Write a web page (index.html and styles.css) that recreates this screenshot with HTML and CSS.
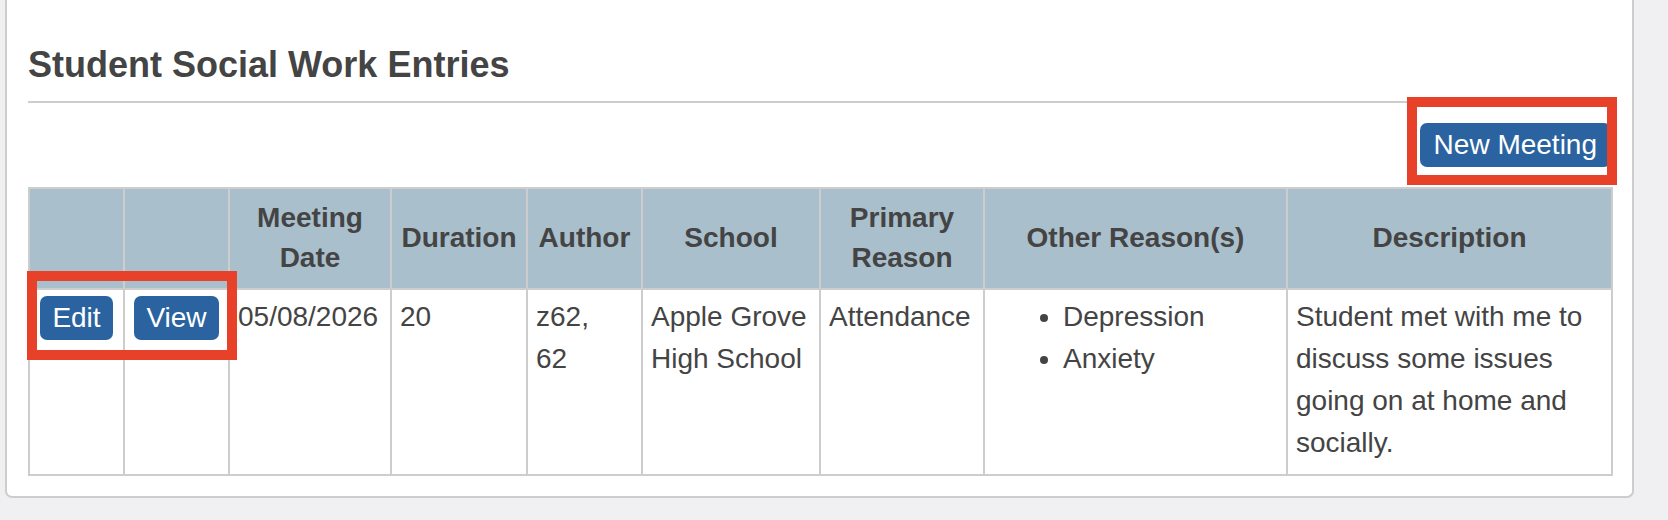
FILE: index.html
```html
<!DOCTYPE html>
<html lang="en">
<head>
  <meta charset="UTF-8">
  <meta name="viewport" content="width=device-width, initial-scale=1.0">
  <title>Student Social Work Entries</title>
  <link rel="stylesheet" href="styles.css">
</head>
<body>
  <div class="page">
    <div class="card">
      <h2 class="card-title">Student Social Work Entries</h2>

      <div class="toolbar">
        <button class="btn">New Meeting</button>
      </div>

      <table class="entries">
        <colgroup>
          <col style="width: 95px">
          <col style="width: 105px">
          <col style="width: 162px">
          <col style="width: 136px">
          <col style="width: 115px">
          <col style="width: 178px">
          <col style="width: 164px">
          <col style="width: 303px">
          <col style="width: 325px">
        </colgroup>
        <thead>
          <tr>
            <th></th>
            <th></th>
            <th>Meeting Date</th>
            <th>Duration</th>
            <th>Author</th>
            <th>School</th>
            <th>Primary Reason</th>
            <th>Other Reason(s)</th>
            <th>Description</th>
          </tr>
        </thead>
        <tbody>
          <tr>
            <td class="action"><button class="btn">Edit</button></td>
            <td class="action"><button class="btn">View</button></td>
            <td>05/08/2026</td>
            <td>20</td>
            <td class="author">z62, 62</td>
            <td>Apple Grove High School</td>
            <td>Attendance</td>
            <td>
              <ul class="reasons">
                <li>Depression</li>
                <li>Anxiety</li>
              </ul>
            </td>
            <td>Student met with me to discuss some issues going on at home and socially.</td>
          </tr>
        </tbody>
      </table>

      <!-- highlight boxes drawn over the screenshot -->
      <div class="callout callout-new"></div>
      <div class="callout callout-actions"></div>
    </div>
  </div>
</body>
</html>
```

FILE: styles.css
```css
body {
  margin: 0;
  padding: 0;
  background-color: #f0f0f2;
  font-family: "Liberation Sans", Arial, Helvetica, sans-serif;
  color: #444;
}

.page {
  padding: 0 34px 0 5px;
}

.card {
  position: relative;
  background-color: #fff;
  border: 2px solid #cdcdcd;
  border-top: none;
  border-radius: 0 0 7px 7px;
  padding: 44px 21px 20px;
}

.card-title {
  margin: 0;
  font-size: 36px;
  line-height: 42px;
  font-weight: bold;
  color: #444;
  padding-bottom: 15px;
  border-bottom: 2px solid #cdcdcd;
}

.toolbar {
  display: flex;
  justify-content: flex-end;
  padding: 20px 0;
}

.btn {
  background-color: #2b63a0;
  color: #fff;
  font-family: inherit;
  font-size: 28px;
  line-height: 32px;
  padding: 6px 12px;
  border: none;
  border-radius: 7px;
  cursor: pointer;
}

.btn:hover {
  background-color: #235389;
}

.toolbar .btn {
  padding: 6px 14px;
}

.entries {
  width: 100%;
  table-layout: fixed;
  border-collapse: collapse;
  font-size: 28px;
}

.entries th,
.entries td {
  border: 2px solid #cdcdcd;
}

.entries th {
  background-color: #a9bfcc;
  font-weight: bold;
  line-height: 40px;
  padding: 9px 8px 10px;
  text-align: center;
  vertical-align: middle;
}

.entries td {
  line-height: 42px;
  padding: 6px 8px 10px;
  vertical-align: top;
  text-align: left;
}

.entries td.action {
  text-align: center;
  padding-left: 4px;
  padding-right: 4px;
}

.entries td.author {
  padding-right: 14px;
}

.reasons {
  margin: 0;
  padding-left: 70px;
}

.callout {
  position: absolute;
  border: 10px solid #e8412a;
  pointer-events: none;
}

.callout-new {
  left: 1400px;
  top: 97px;
  width: 190px;
  height: 68px;
}

.callout-actions {
  left: 20px;
  top: 271px;
  width: 190px;
  height: 69px;
}
```
